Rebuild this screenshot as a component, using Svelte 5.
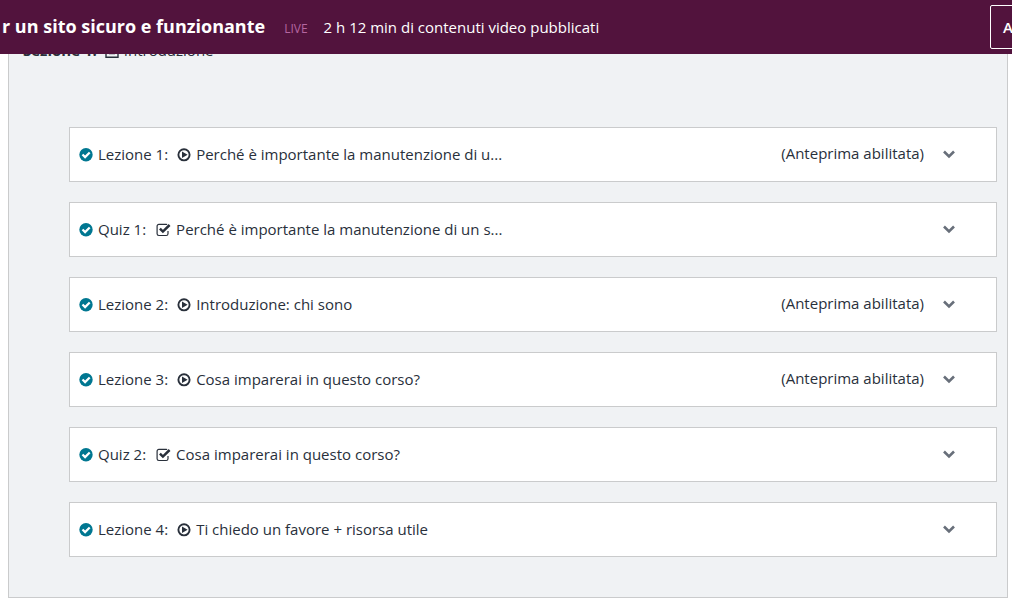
<script lang="ts">
	interface Item {
		kind: 'lecture' | 'quiz';
		label: string;
		title: string;
		preview?: boolean;
	}

	const items: Item[] = [
		{ kind: 'lecture', label: 'Lezione 1:', title: 'Perché è importante la manutenzione di u...', preview: true },
		{ kind: 'quiz', label: 'Quiz 1:', title: 'Perché è importante la manutenzione di un s...' },
		{ kind: 'lecture', label: 'Lezione 2:', title: 'Introduzione: chi sono', preview: true },
		{ kind: 'lecture', label: 'Lezione 3:', title: 'Cosa imparerai in questo corso?', preview: true },
		{ kind: 'quiz', label: 'Quiz 2:', title: 'Cosa imparerai in questo corso?' },
		{ kind: 'lecture', label: 'Lezione 4:', title: 'Ti chiedo un favore + risorsa utile' }
	];

	let open = $state<number | null>(null);

	function toggle(i: number) {
		open = open === i ? null : i;
	}
</script>

<header class="topbar">
	<div class="course">
		<h1>r un sito sicuro e funzionante</h1>
		<span class="status">LIVE</span>
		<span class="duration">2 h 12 min di contenuti video pubblicati</span>
	</div>
	<button type="button" class="preview-btn">A</button>
</header>

<main class="section">
	<h2 class="section-title">
		<span class="section-label">Sezione 1:</span>
		<svg class="file" viewBox="0 0 14 14" aria-hidden="true">
			<path d="M1 .8h8.5L13 4.2v9H1z" fill="none" stroke="currentColor" stroke-width="1.4" />
			<path d="M4 6h6M4 9.5h6" stroke="currentColor" stroke-width="1.4" />
		</svg>
		<span class="section-name">Introduzione</span>
	</h2>

	<ul class="items">
		{#each items as item, i}
			<li class="item">
				<svg class="done" viewBox="0 0 14 14" aria-hidden="true">
					<circle cx="7" cy="6.8" r="6.7" fill="currentColor" />
					<path d="M3.5 6.5l2.6 2.6 4.6-4.6" fill="none" stroke="#fff" stroke-width="2.2" />
				</svg>
				<span class="label">{item.label}</span>
				{#if item.kind === 'lecture'}
					<svg class="kind" viewBox="0 0 14 14" aria-hidden="true">
						<circle cx="7" cy="6.8" r="5.6" fill="none" stroke="currentColor" stroke-width="1.9" />
						<path d="M5 3.5v6.6L10.6 6.8z" fill="currentColor" />
					</svg>
				{:else}
					<svg class="kind quiz" viewBox="0 0 15 14" aria-hidden="true">
						<path
							d="M12 8v2.7a1.8 1.8 0 0 1-1.8 1.8H2.9a1.8 1.8 0 0 1-1.8-1.8V3.1a1.8 1.8 0 0 1 1.8-1.8h7.3q.5 0 1 .2"
							fill="none"
							stroke="currentColor"
							stroke-width="1.2"
						/>
						<path d="M3.9 5.6l3 3L13.6 2" fill="none" stroke="currentColor" stroke-width="2.5" />
					</svg>
				{/if}
				<span class="title">{item.title}</span>
				{#if item.preview}
					<span class="preview">(Anteprima abilitata)</span>
				{/if}
				<button
					type="button"
					class="toggle"
					class:open={open === i}
					aria-label="Espandi {item.label} {item.title}"
					aria-expanded={open === i}
					onclick={() => toggle(i)}
				>
					<svg viewBox="0 0 14 14" aria-hidden="true">
						<path d="M2 4.5l5 5 5-5" fill="none" stroke="currentColor" stroke-width="2.6" />
					</svg>
				</button>
			</li>
		{/each}
	</ul>
</main>

<style>
	:global(body) {
		margin: 0;
		background: #fff;
		overflow-x: hidden;
	}

	.topbar,
	.section {
		font-family: 'Open Sans', 'Noto Sans', sans-serif;
		font-size: 15px;
		line-height: 21px;
		color: #29303b;
	}

	.topbar {
		position: sticky;
		top: 0;
		z-index: 1;
		display: flex;
		align-items: center;
		box-sizing: border-box;
		height: 54px;
		overflow: hidden;
		background: #52133d;
		color: #fff;
		white-space: nowrap;
	}

	.course {
		display: flex;
		align-items: baseline;
	}

	h1 {
		margin: 0 19px 0 2px;
		font-size: 18px;
		font-weight: 700;
	}

	.status {
		margin-right: 16px;
		font-size: 12px;
		color: #b566a0;
	}

	/* the button runs past the right edge of the bar */
	.preview-btn {
		flex: none;
		box-sizing: border-box;
		width: 100px;
		height: 44px;
		margin: 0 -78px 0 auto;
		padding: 0 12px;
		border: 1px solid #fff;
		border-radius: 2px;
		background: transparent;
		color: #fff;
		font: inherit;
		font-weight: 600;
		text-align: left;
	}

	.section {
		margin: -25px 4px 6px 8px;
		padding: 10px 10px 40px 14px;
		border: 1px solid #cacbcc;
		background: #f0f2f4;
	}

	.section-title {
		display: flex;
		align-items: center;
		margin: 0 0 66px;
		font-size: 15px;
		font-weight: 400;
	}

	.section-label {
		font-weight: 700;
	}

	.file {
		width: 14px;
		height: 14px;
		margin: 0 5px 0 8px;
	}

	.items {
		display: flex;
		flex-direction: column;
		gap: 20px;
		margin: 0 0 0 46px;
		padding: 0;
		list-style: none;
	}

	.item {
		display: flex;
		align-items: center;
		box-sizing: border-box;
		min-height: 55px;
		padding: 0 40px 0 9px;
		border: 1px solid #cacbcc;
		background: #fff;
	}

	.done,
	.kind {
		flex: none;
		width: 14px;
		height: 14px;
	}

	.done {
		margin-right: 5px;
		color: #007791;
	}

	.kind {
		margin: 0 5px 0 9px;
	}

	.kind.quiz {
		width: 15px;
		margin-left: 10px;
	}

	.title {
		flex: 1;
	}

	.preview,
	.toggle {
		margin-bottom: 2px;
	}

	.preview {
		margin-right: 18px;
	}

	.toggle {
		display: flex;
		padding: 0;
		border: 0;
		background: transparent;
		color: #686f7a;
		cursor: pointer;
	}

	.toggle svg {
		width: 14px;
		height: 14px;
	}

	.toggle.open svg {
		transform: rotate(180deg);
	}
</style>
